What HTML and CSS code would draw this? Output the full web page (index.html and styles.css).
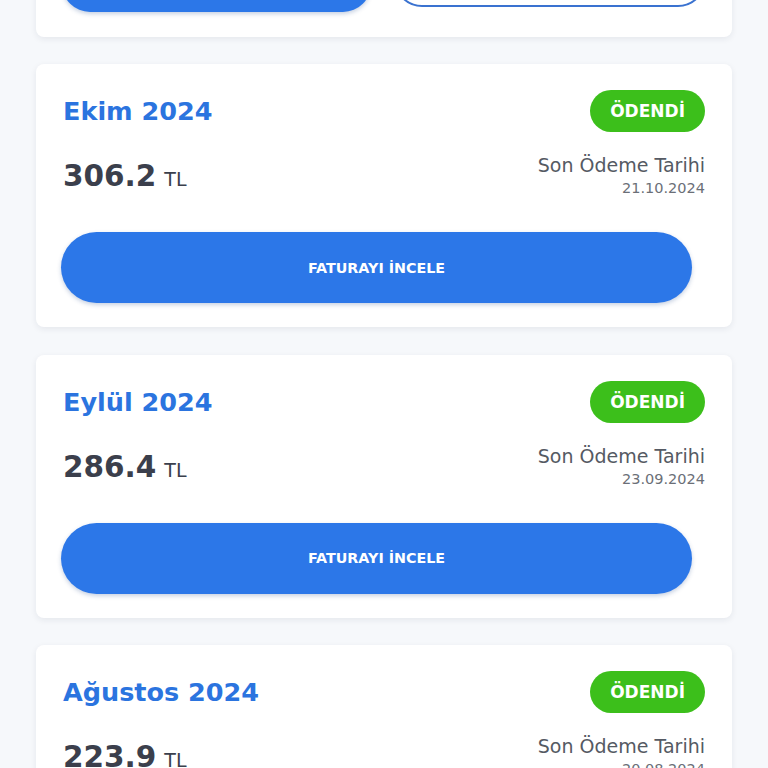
FILE: index.html
```html
<!DOCTYPE html>
<html lang="tr">
<head>
    <meta charset="UTF-8">
    <meta name="viewport" content="width=device-width, initial-scale=1.0">
    <title>Faturalarım</title>
    <link rel="stylesheet" href="styles.css">
</head>
<body>
    <main class="bill-list">
        <!-- Üstteki kart (kısmen görünür) -->
        <div class="card card-top">
            <div class="top-actions">
                <button class="btn-primary"></button>
                <button class="btn-outline"></button>
            </div>
        </div>

        <div class="card bill">
            <div class="bill-head">
                <h2 class="bill-month">Ekim 2024</h2>
                <span class="badge">ÖDENDİ</span>
            </div>
            <div class="bill-info">
                <div class="amount">306.2<span class="currency">TL</span></div>
                <div class="due">
                    <div class="due-label">Son Ödeme Tarihi</div>
                    <div class="due-date">21.10.2024</div>
                </div>
            </div>
            <button class="btn-bill">FATURAYI İNCELE</button>
        </div>

        <div class="card bill">
            <div class="bill-head">
                <h2 class="bill-month">Eylül 2024</h2>
                <span class="badge">ÖDENDİ</span>
            </div>
            <div class="bill-info">
                <div class="amount">286.4<span class="currency">TL</span></div>
                <div class="due">
                    <div class="due-label">Son Ödeme Tarihi</div>
                    <div class="due-date">23.09.2024</div>
                </div>
            </div>
            <button class="btn-bill">FATURAYI İNCELE</button>
        </div>

        <div class="card bill">
            <div class="bill-head">
                <h2 class="bill-month">Ağustos 2024</h2>
                <span class="badge">ÖDENDİ</span>
            </div>
            <div class="bill-info">
                <div class="amount">223.9<span class="currency">TL</span></div>
                <div class="due">
                    <div class="due-label">Son Ödeme Tarihi</div>
                    <div class="due-date">20.08.2024</div>
                </div>
            </div>
            <button class="btn-bill">FATURAYI İNCELE</button>
        </div>
    </main>
</body>
</html>
```

FILE: styles.css
```css
body {
    margin: 0;
    padding: 0;
    background-color: #f6f8fb;
    font-family: "DejaVu Sans", "Noto Sans", sans-serif;
    color: #3b3f4c;
    height: 768px;
    overflow: hidden;
}

.bill-list {
    display: flex;
    flex-direction: column;
    gap: 27.5px;
    padding: 0 36px;
}

.card {
    background-color: #fff;
    border-radius: 8px;
    box-shadow: 0 2px 6px rgba(30, 40, 60, 0.08);
}

/* kart üstte kesik */
.card-top {
    margin-top: -43.5px;
    padding: 0 26px 24px;
}

.top-actions {
    display: flex;
    gap: 23px;
}

.top-actions button {
    flex: 1;
    height: 56px;
    border-radius: 28px;
}

.btn-primary {
    background-color: #2c77e8;
    border: none;
    box-shadow: 0 2px 4px rgba(30, 70, 140, 0.25);
    transform: translateY(-1px);
}

.btn-outline {
    background-color: #fff;
    border: 2px solid #3a72d0;
    transform: translateY(-6px);
}

.bill {
    padding: 26px 27px 24px 25px;
    display: flex;
    flex-direction: column;
}

.bill-head {
    display: flex;
    justify-content: space-between;
    align-items: center;
    padding-left: 2px;
}

.bill-month {
    margin: 0;
    font-size: 25.5px;
    font-weight: bold;
    color: #2b74df;
}

.badge {
    height: 42px;
    padding: 0 20px;
    display: flex;
    align-items: center;
    background-color: #3cbf1b;
    color: #fff;
    font-size: 17px;
    font-weight: bold;
    border-radius: 21px;
}

.bill-info {
    display: flex;
    justify-content: space-between;
    align-items: center;
    margin-top: 21px;
    padding-left: 2px;
}

.amount {
    font-size: 29.5px;
    font-weight: bold;
    color: #3b3f4c;
}

.currency {
    margin-left: 8px;
    font-size: 19px;
    font-weight: normal;
}

.due {
    text-align: right;
}

.due-label {
    font-size: 19px;
    line-height: 24px;
    color: #555a63;
}

.due-date {
    font-size: 14.5px;
    line-height: 22px;
    color: #6b6f77;
}

.btn-bill {
    margin-top: 33px;
    margin-right: 13px;
    height: 71px;
    border: none;
    border-radius: 36px;
    background-color: #2c77e8;
    color: #fff;
    font-family: "DejaVu Sans", sans-serif;
    font-size: 14.3px;
    font-weight: bold;
    box-shadow: 0 2px 4px rgba(30, 70, 140, 0.25);
}
```
